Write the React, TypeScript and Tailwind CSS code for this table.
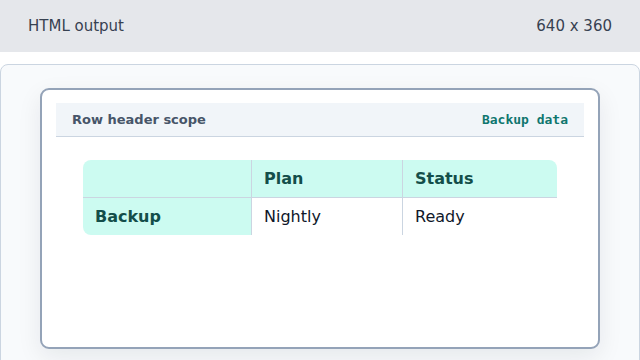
import React from 'react';

const rows = [{ name: 'Backup', plan: 'Nightly', status: 'Ready' }];

export default function App() {
  return (
    <div className="w-[640px] h-[360px] overflow-hidden bg-white font-['DejaVu_Sans',sans-serif]">
      {/* top bar */}
      <div className="h-[52px] bg-[#e5e7eb] flex items-center justify-between px-7 text-[15px] text-[#374151]">
        <span>HTML output</span>
        <span>640 x 360</span>
      </div>

      {/* preview panel */}
      <div className="mt-3 h-[320px] border border-[#cbd5e1] rounded-lg bg-[#f8fafc] px-[39px] pt-[23px]">
        <div className="h-[261px] border-2 border-[#94a3b8] rounded-[9px] bg-white shadow-[0_8px_24px_rgba(15,23,42,0.08)] pt-[13px] px-[14px]">
          <div className="h-[34px] bg-[#f1f5f9] border-b border-[#cbd5e1] flex items-center justify-between px-4">
            <span className="text-[13px] font-bold text-[#475569]">Row header scope</span>
            <span className="text-[13px] font-bold text-[#0f766e] font-['DejaVu_Sans_Mono',monospace]">Backup data</span>
          </div>

          <table className="mt-[23px] mx-auto w-[474px] table-fixed border-separate border-spacing-0 text-[16px]">
            <colgroup>
              <col className="w-[169px]" />
              <col className="w-[151px]" />
              <col />
            </colgroup>
            <thead>
              <tr className="h-[38px]">
                <td className="bg-[#ccfbf1] rounded-tl-lg border-b border-r border-[#cbd5e1]"></td>
                <th scope="col" className="bg-[#ccfbf1] text-left font-bold text-[#134e4a] px-3 border-b border-r border-[#cbd5e1]">Plan</th>
                <th scope="col" className="bg-[#ccfbf1] text-left font-bold text-[#134e4a] px-3 border-b border-[#cbd5e1] rounded-tr-lg">Status</th>
              </tr>
            </thead>
            <tbody>
              {rows.map((r) => (
                <tr key={r.name} className="h-[37px]">
                  <th scope="row" className="bg-[#ccfbf1] text-left font-bold text-[#134e4a] px-3 border-r border-[#cbd5e1] rounded-bl-lg">{r.name}</th>
                  <td className="px-3 text-[#0f172a] border-r border-[#cbd5e1]">{r.plan}</td>
                  <td className="px-3 text-[#0f172a]">{r.status}</td>
                </tr>
              ))}
            </tbody>
          </table>
        </div>
      </div>
    </div>
  );
}
